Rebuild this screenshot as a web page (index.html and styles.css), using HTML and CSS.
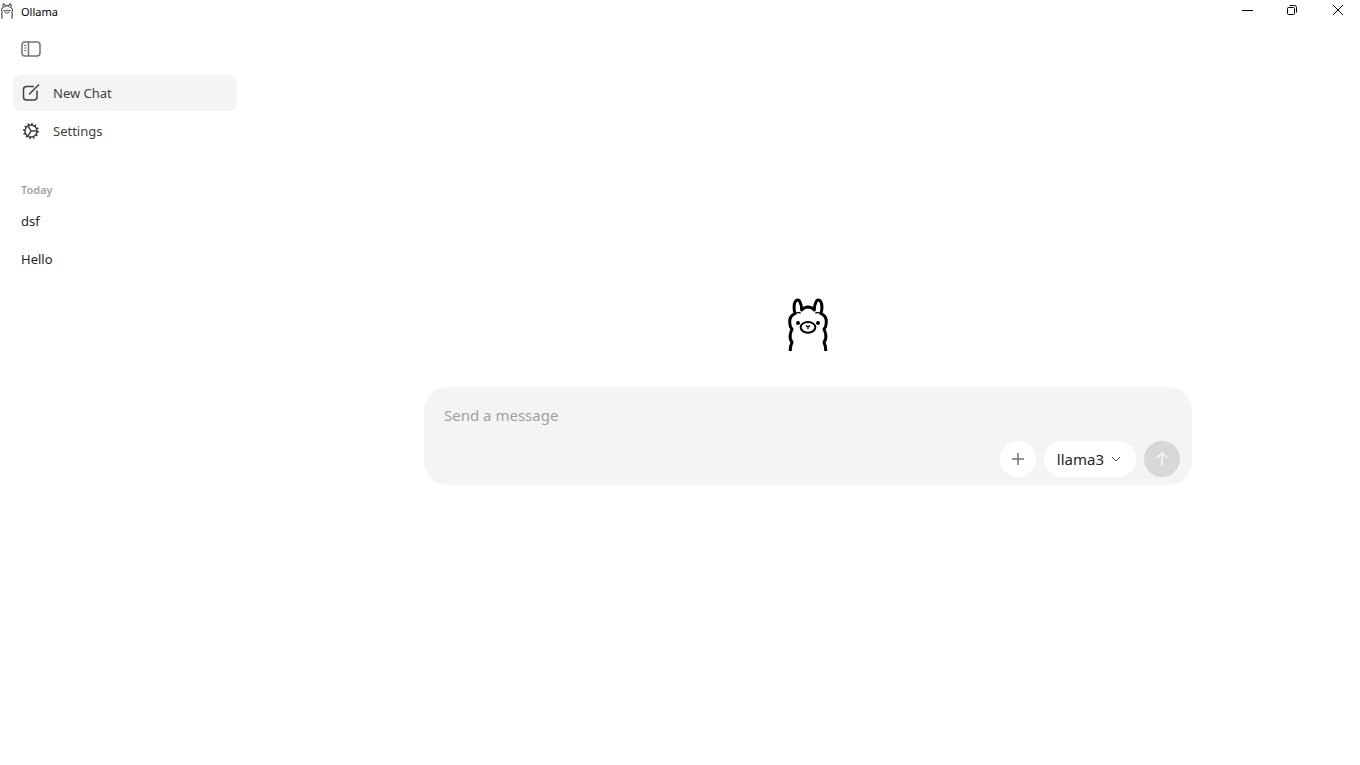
FILE: index.html
```html
<!DOCTYPE html>
<html lang="en">
<head>
    <meta charset="UTF-8">
    <meta name="viewport" content="width=device-width, initial-scale=1.0">
    <title>Ollama</title>
    <link rel="stylesheet" href="styles.css">
</head>
<body>
    <!-- shared llama drawing, used in the title bar and above the composer -->
    <svg class="sprite" aria-hidden="true">
        <symbol id="llama" viewBox="33 24 126 162">
            <g fill="none" stroke="currentColor" stroke-linecap="butt" stroke-linejoin="round">
                <path id="llama-side" d="M43 183V177C43 168 45 164 48 157C43 150 41 141 43 132C44 126 46 122 48 118C43 112 41 104 41 96C41 84 46 75 57 71C53 58 53 40 59 33C62 29 68 29 71 34C75 41 77 52 77 60C82 54 88 51 97 51"/>
                <use href="#llama-side" transform="translate(192 0) scale(-1 1)"/>
                <path d="M57 71C63 67 70 68 74 69M135 71C129 67 122 68 118 69" stroke-width="4"/>
                <ellipse class="muzzle" cx="96" cy="112" rx="22" ry="16"/>
                <path class="nose" d="M90 107L96 111L102 107M96 111V118"/>
            </g>
            <circle cx="66" cy="99" r="6" fill="currentColor" stroke="none"/>
            <circle cx="126" cy="99" r="6" fill="currentColor" stroke="none"/>
        </symbol>
    </svg>

    <header class="titlebar">
        <svg class="titlebar-logo" aria-hidden="true"><use href="#llama"/></svg>
        <span class="titlebar-name">Ollama</span>
        <div class="window-buttons">
            <button type="button" aria-label="Minimize">
                <svg width="12" height="12" viewBox="0 0 12 12"><path d="M0 6.5H11"/></svg>
            </button>
            <button type="button" aria-label="Restore">
                <svg width="12" height="12" viewBox="0 0 12 12"><rect x="0.5" y="3.5" width="7" height="7" rx="1"/><path d="M2.5 1.5H7.5Q9.5 1.5 9.5 3.5V8.5"/></svg>
            </button>
            <button type="button" aria-label="Close">
                <svg width="12" height="12" viewBox="0 0 12 12"><path d="M1 1L11 11M11 1L1 11"/></svg>
            </button>
        </div>
    </header>

    <div class="app">
        <aside class="sidebar">
            <button type="button" class="toggle" aria-label="Toggle sidebar">
                <svg width="20" height="16" viewBox="0 0 20 16">
                    <rect x="1" y="1" width="18" height="14" rx="3"/>
                    <path d="M7.5 1V15"/>
                    <path class="thin" d="M3 4.5H5.5M3 7H5.5M3 9.5H5.5"/>
                </svg>
            </button>
            <nav class="menu">
                <a href="#" class="menu-item active">
                    <svg width="18" height="18" viewBox="0 0 18 18">
                        <path d="M12 2.5H4.5Q1.5 2.5 1.5 5.5V13Q1.5 16 4.5 16H12Q15 16 15 13V6.5"/>
                        <path d="M7 10.5L17 0.5"/>
                    </svg>
                    New Chat
                </a>
                <a href="#" class="menu-item">
                    <svg width="18" height="18" viewBox="0 0 18 18">
                        <circle cx="9" cy="9" r="6"/>
                        <circle class="teeth" cx="9" cy="9" r="7"/>
                        <path d="M6 3.8L9 9L6 14.2M9 9H15"/>
                    </svg>
                    Settings
                </a>
            </nav>
            <section class="history">
                <h2>Today</h2>
                <a href="#">dsf</a>
                <a href="#">Hello</a>
            </section>
        </aside>

        <main class="chat">
            <svg class="logo" role="img" aria-label="Ollama"><use href="#llama"/></svg>
            <form class="composer">
                <textarea rows="1" placeholder="Send a message" aria-label="Message"></textarea>
                <div class="actions">
                    <button type="button" class="round" aria-label="Add">
                        <svg width="14" height="14" viewBox="0 0 14 14"><path d="M7 1V13M1 7H13"/></svg>
                    </button>
                    <button type="button" class="model">
                        llama3
                        <svg width="10" height="10" viewBox="0 0 10 10"><path d="M1 3L5 7L9 3"/></svg>
                    </button>
                    <button type="submit" class="round send" aria-label="Send">
                        <svg width="14" height="16" viewBox="0 0 14 16"><path d="M7 15V2M2 7L7 2L12 7"/></svg>
                    </button>
                </div>
            </form>
        </main>
    </div>
</body>
</html>
```
FILE: styles.css
```css
* {
    box-sizing: border-box;
}
body {
    margin: 0;
    min-height: 100vh;
    display: flex;
    flex-direction: column;
    background: #fff;
    color: #262626;
    font-family: "Segoe UI", "Noto Sans", "Open Sans", sans-serif;
}
button {
    display: flex;
    align-items: center;
    justify-content: center;
    border: 0;
    padding: 0;
    background: none;
    font: inherit;
    color: inherit;
    cursor: pointer;
}
a {
    color: inherit;
    text-decoration: none;
}
svg {
    flex: none;
    fill: none;
    stroke: currentColor;
}
.sprite {
    position: absolute;
    width: 0;
    height: 0;
}
#llama-side {
    stroke-width: 9;
}
.muzzle {
    stroke-width: 6;
}
.nose {
    stroke-width: 4;
}

/* title bar */
.titlebar {
    display: flex;
    align-items: center;
    height: 22px;
    color: #000;
    font-size: 11px;
}
.titlebar-logo {
    width: 14px;
    height: 16px;
    margin-right: 7px;
}
.window-buttons {
    display: flex;
    align-self: flex-start;
    margin-left: auto;
}
.window-buttons button {
    width: 45px;
    height: 20px;
}

.app {
    flex: 1;
    display: flex;
}

/* sidebar */
.sidebar {
    width: 256px;
    padding: 14px 19px 0 13px;
}
.toggle {
    width: 36px;
    height: 25px;
    color: #737373;
}
.toggle svg {
    stroke-width: 1.5;
}
.toggle .thin {
    stroke-width: 1;
}
.menu {
    display: flex;
    flex-direction: column;
    gap: 2px;
    margin-top: 14px;
}
.menu-item {
    display: flex;
    align-items: center;
    gap: 13px;
    height: 36px;
    padding: 0 9px;
    border-radius: 8px;
    font-size: 13px;
    color: #404040;
}
.menu-item svg {
    stroke-width: 1.5;
}
.menu-item .teeth {
    stroke-width: 2;
    stroke-dasharray: 1.6 2.065;
}
.menu-item.active {
    background: #f4f4f4;
}
.history {
    display: flex;
    flex-direction: column;
    gap: 2px;
    margin-top: 32px;
    padding-left: 8px;
    font-size: 13px;
}
.history h2 {
    margin: 0 0 2px;
    font-size: 11px;
    font-weight: 600;
    line-height: 18px;
    color: #a3a3a3;
}
.history a {
    line-height: 36px;
}

/* empty chat */
.chat {
    flex: 1;
    display: flex;
    flex-direction: column;
    align-items: center;
    justify-content: center;
    gap: 35px;
    padding: 0 24px 4px;
}
.logo {
    width: 42px;
    height: 54px;
    color: #000;
}
.composer {
    width: 100%;
    max-width: 768px;
    padding: 16px 12px 8px 20px;
    border-radius: 24px;
    background: #f4f4f4;
}
.composer textarea {
    display: block;
    width: 100%;
    height: 24px;
    padding: 0;
    border: 0;
    outline: 0;
    resize: none;
    background: none;
    font: inherit;
    font-size: 15px;
    line-height: 24px;
}
.composer textarea::placeholder {
    color: #a0a0a0;
}
.actions {
    display: flex;
    justify-content: flex-end;
    gap: 8px;
    margin-top: 14px;
}
.round {
    width: 36px;
    height: 36px;
    border-radius: 50%;
    background: #fff;
    color: #737373;
}
.round svg {
    stroke-width: 1.5;
}
.model {
    gap: 7px;
    height: 36px;
    padding: 0 15px 0 13px;
    border-radius: 18px;
    background: #fff;
    font-size: 15px;
}
.model svg {
    color: #525252;
}
.send {
    background: #d8d8d8;
    color: #f6f6f6;
}
```
